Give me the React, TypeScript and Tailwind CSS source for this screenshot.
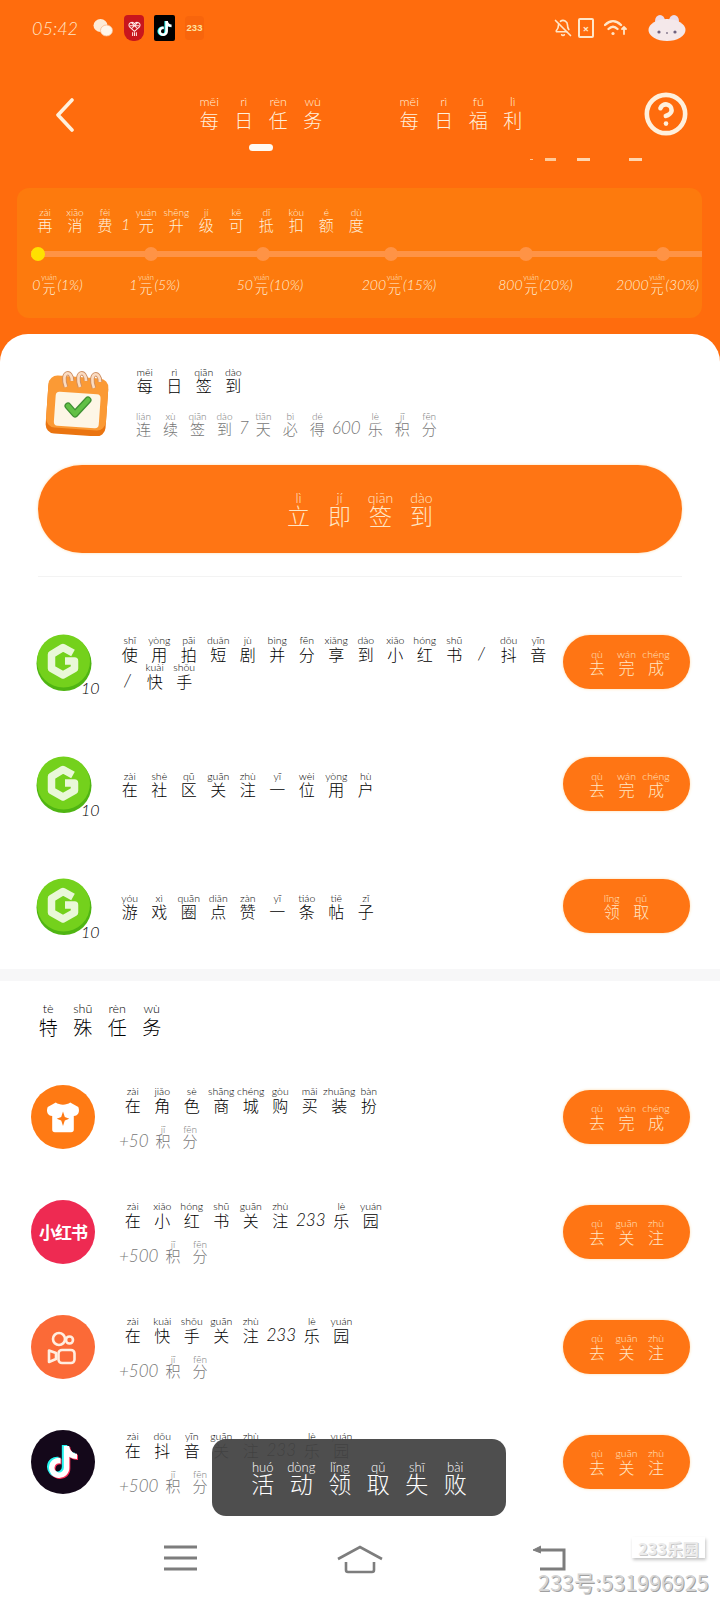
import { CircleHelp, BellOff } from "lucide-react";
import { FaTiktok } from "react-icons/fa";

const presets = {
  tab: { w: "w-[34.5px]", c: "h-[22px] text-[19px]", p: "h-[12px] text-[12.5px]", n: "h-[22px] text-[18px]" },
  row: { w: "w-[29.5px]", c: "h-[16px] text-[16px]", p: "h-[10px] text-[10.5px]", n: "h-[16px] text-[17px] italic" },
  panel: { w: "w-[30px]", c: "h-[16px] text-[15px]", p: "h-[8px] text-[10px]", n: "h-[16px] text-[16px] italic" },
  sub: { w: "w-[27px]", c: "h-[16px] text-[15px]", p: "h-[8px] text-[10px]", n: "h-[16px] text-[17px] italic" },
  label: { w: "w-[15px]", c: "h-[12px] text-[13px]", p: "h-[6px] text-[7.5px]", n: "h-[18px] text-[14px] italic" },
  big: { w: "w-[41px]", c: "h-[22px] text-[23px]", p: "h-[12px] text-[14px]", n: "h-[22px] text-[23px]" },
  toast: { w: "w-[38.5px]", c: "h-[20px] text-[23px]", p: "h-[12px] text-[13px]", n: "h-[20px] text-[23px]" },
};

// one hanzi per cell with its pinyin on top; digits and signs have no pinyin
function Py({ text, py, size, className = "" }: { text: string; py: string; size: keyof typeof presets; className?: string }) {
  const s = presets[size];
  const pins = py.split(" ");
  const tokens = text.match(/[0-9+()%/]+|./g) ?? [];
  let i = 0;
  return (
    <div className={`flex items-end whitespace-nowrap font-['Noto_Sans_CJK_SC',sans-serif] font-light ${className}`}>
      {tokens.map((t, k) => {
        if (/^[0-9+()%/]+$/.test(t)) {
          return (
            <span key={k} className={`${s.n} flex items-center font-['Lato',sans-serif] font-light ${t === "/" ? "px-[9px]" : "px-[1px]"}`}>
              {t}
            </span>
          );
        }
        const pin = pins[i++];
        return (
          <div key={k} className={`${s.w} flex flex-col items-center`}>
            <span className={`${s.p} flex items-center justify-center leading-none font-['Lato',sans-serif]`}>{pin}</span>
            <span className={`${s.c} flex items-center justify-center leading-none`}>{t}</span>
          </div>
        );
      })}
    </div>
  );
}

function Coin() {
  return (
    <div className="relative w-[56px] h-[57px] shrink-0">
      <svg viewBox="0 0 56 57" className="w-[56px] h-[57px]">
        <ellipse cx="28" cy="29.5" rx="27.5" ry="27.5" fill="#4fb512" />
        <ellipse cx="27.5" cy="27" rx="26.5" ry="26.5" fill="#74d11c" />
        <path d="M37 19 L27 13.5 L15.5 20.5 L15.5 34.5 L27 41 L38.5 34.5 L38.5 27 L29 27" fill="none" stroke="#e9f8d8" strokeWidth="7.5" strokeLinejoin="round" />
      </svg>
      <span className="absolute left-[45px] bottom-[-5px] text-[16px] leading-none italic font-light text-black font-['Lato',sans-serif]">10</span>
    </div>
  );
}

function Calendar() {
  return (
    <svg viewBox="0 0 66 66" className="w-[66px] h-[66px] shrink-0">
      <g transform="rotate(4 33 36)">
        <rect x="3" y="9" width="60" height="56" rx="9" fill="#ea7410" />
        <rect x="3" y="7" width="60" height="52" rx="9" fill="#fb9a35" />
        <rect x="11" y="23" width="45" height="34" rx="4" fill="#fdf6e6" />
      </g>
      <path d="M24 36 L31 44 L44 30" fill="none" stroke="#3f8f33" strokeWidth="7" strokeLinecap="round" strokeLinejoin="round" />
      <path d="M24 36 L31 44 L44 30" fill="none" stroke="#62c046" strokeWidth="4.5" strokeLinecap="round" strokeLinejoin="round" />
      <path d="M22 17 C16 1 28 -1 28 11 M36 17 C30 1 42 -1 42 11 M50 18 C44 2 56 0 56 12" fill="none" stroke="#cf8f62" strokeWidth="4.5" />
      <path d="M22 17 C16 1 28 -1 28 11 M36 17 C30 1 42 -1 42 11 M50 18 C44 2 56 0 56 12" fill="none" stroke="#fbdcc2" strokeWidth="2.6" />
    </svg>
  );
}

function Shirt() {
  return (
    <div className="w-[64px] h-[64px] rounded-full bg-[#ff7a14] flex items-center justify-center shrink-0">
      <svg viewBox="0 0 40 40" className="w-[36px] h-[36px]">
        <path d="M12 4 C16 7 24 7 28 4 L37 9 C39 14 37 19 32 19 L32 34 Q32 37 29 37 L11 37 Q8 37 8 34 L8 19 C3 19 1 14 3 9 Z" fill="#fff" />
        <path d="M20 14 L22 20 L27 22 L22 24 L20 30 L18 24 L13 22 L18 20 Z" fill="#ff7a14" />
      </svg>
    </div>
  );
}

function Xhs() {
  return (
    <div className="w-[64px] h-[64px] rounded-full bg-[#ee2a52] flex items-center justify-center shrink-0 text-white text-[17px] font-bold tracking-[-1px] font-['Noto_Sans_CJK_SC',sans-serif]">
      小红书
    </div>
  );
}

function Kuaishou() {
  return (
    <svg viewBox="0 0 64 64" className="w-[64px] h-[64px] shrink-0">
      <circle cx="32" cy="32" r="32" fill="#fb6a37" />
      <g fill="none" stroke="#ffeee0" strokeWidth="2.6" strokeLinejoin="round">
        <circle cx="28" cy="24" r="6" />
        <circle cx="38.5" cy="25" r="3.5" />
        <rect x="27.5" y="35" width="16" height="13" rx="3.5" />
        <path d="M25 38 L18 35.5 L18 47 L25 44 Z" />
      </g>
    </svg>
  );
}

function Douyin() {
  return (
    <div className="w-[64px] h-[64px] rounded-full bg-[#14081a] flex items-center justify-center shrink-0">
      <FaTiktok className="w-[30px] h-[32px] text-white [filter:drop-shadow(-1.5px_-1px_0_#25f4ee)_drop-shadow(1.5px_1px_0_#fe2c55)]" />
    </div>
  );
}

function Btn({ text, py }: { text: string; py: string }) {
  return (
    <div className="ml-auto w-[127px] h-[54px] rounded-full bg-[#ff7514] shadow-[0_0_3px_#ffd9a8] flex items-center justify-center text-[#ffe6c4] shrink-0">
      <Py text={text} py={py} size="row" />
    </div>
  );
}

const track = [
  { ml: "ml-0", bg: "bg-[#ffe100]" },
  { ml: "ml-[99px]", bg: "bg-[#ff9345]" },
  { ml: "ml-[98px]", bg: "bg-[#ff9345]" },
  { ml: "ml-[114px]", bg: "bg-[#ff9345]" },
  { ml: "ml-[121px]", bg: "bg-[#ff9345]" },
  { ml: "ml-[123px]", bg: "bg-[#ff9345]" },
];

const labels = [
  { a: "0", b: "(1%)", box: "ml-[14px] w-[53px]" },
  { a: "1", b: "(5%)", box: "ml-[45px] w-[51px]" },
  { a: "50", b: "(10%)", box: "ml-[56px] w-[68px]" },
  { a: "200", b: "(15%)", box: "ml-[57px] w-[76px]" },
  { a: "800", b: "(20%)", box: "ml-[60px] w-[77px]" },
  { a: "2000", b: "(30%)", box: "ml-[41px] w-[85px]" },
];

const daily = [
  {
    text: "使用拍短剧并分享到小红书/抖音/快手",
    py: "shǐ yòng pāi duǎn jù bìng fēn xiǎng dào xiǎo hóng shū dǒu yīn kuài shǒu",
    btn: "去完成",
    btnPy: "qù wán chéng",
  },
  { text: "在社区关注一位用户", py: "zài shè qū guān zhù yī wèi yòng hù", btn: "去完成", btnPy: "qù wán chéng" },
  { text: "游戏圈点赞一条帖子", py: "yóu xì quān diǎn zàn yī tiáo tiě zǐ", btn: "领取", btnPy: "lǐng qǔ" },
];

const special = [
  { icon: <Shirt />, text: "在角色商城购买装扮", py: "zài jiǎo sè shāng chéng gòu mǎi zhuāng bàn", pts: "+50", btn: "去完成", btnPy: "qù wán chéng" },
  { icon: <Xhs />, text: "在小红书关注233乐园", py: "zài xiǎo hóng shū guān zhù lè yuán", pts: "+500", btn: "去关注", btnPy: "qù guān zhù" },
  { icon: <Kuaishou />, text: "在快手关注233乐园", py: "zài kuài shǒu guān zhù lè yuán", pts: "+500", btn: "去关注", btnPy: "qù guān zhù" },
  { icon: <Douyin />, text: "在抖音关注233乐园", py: "zài dǒu yīn guān zhù lè yuán", pts: "+500", btn: "去关注", btnPy: "qù guān zhù" },
];

// the sentence wraps by words so "/快手" drops to the second line
function DailyText({ text, py }: { text: string; py: string }) {
  if (!text.includes("/")) return <Py text={text} py={py} size="row" />;
  const pins = py.split(" ");
  return (
    <div className="flex flex-wrap gap-y-[1px] w-[440px]">
      <Py text="使用拍短剧并分享到小红书/抖音" py={pins.slice(0, 14).join(" ")} size="row" />
      <Py text="/快手" py={pins.slice(14).join(" ")} size="row" />
    </div>
  );
}

export default function App() {
  return (
    <div className="relative w-[720px] h-[1600px] overflow-hidden bg-white text-black">
      {/* orange header */}
      <div className="bg-[#ff6c0d] text-[#fff0dc] pb-[56px] -mb-[40px]">
        <div className="h-[56px] flex items-center pl-[32px] text-[#ffe6c8]">
          <span className="text-[18px] italic font-light w-[48px] font-['Lato',sans-serif]">05:42</span>
          <svg viewBox="0 0 20 20" className="ml-[13px] w-[20px] h-[20px]">
            <ellipse cx="7.5" cy="7.5" rx="7" ry="6.5" fill="#fdebd6" />
            <ellipse cx="13.5" cy="12.5" rx="6" ry="5.5" fill="#fff6ea" stroke="#f7b98a" strokeWidth="0.8" />
          </svg>
          <div className="ml-[11px] w-[20px] h-[26px] rounded-t-[4px] rounded-b-[9px] bg-[#c8161d] flex items-center justify-center">
            <svg viewBox="0 0 16 18" className="w-[15px] h-[17px]" fill="none" stroke="#ffe9e6" strokeWidth="1.1">
              <path d="M8 12 L2.5 7 C0.5 3 6 1 8 4 C10 1 15.5 3 13.5 7 Z M5 3 L11 9 M11 3 L5 9 M3 6 H13 M6 13 V17 M8 13 V17 M10 13 V17" />
            </svg>
          </div>
          <div className="ml-[10px] w-[21px] h-[26px] rounded-[2px] bg-black flex items-center justify-center">
            <FaTiktok className="w-[14px] h-[15px] text-white [filter:drop-shadow(-1px_0_0_#25f4ee)]" />
          </div>
          <div className="ml-[10px] w-[19px] h-[24px] rounded-[4px] bg-[#f8650c] flex items-center justify-center text-[9.5px] font-bold text-[#ffe2a0] font-['Liberation_Sans',sans-serif]">
            233
          </div>
          <BellOff className="ml-[350px] w-[18px] h-[20px] shrink-0" strokeWidth={2.2} />
          <div className="ml-[6px] w-[16px] h-[20px] rounded-[2px] border-2 border-[#ffe6c8] flex items-center justify-center text-[11px] leading-none font-bold shrink-0">
            ×
          </div>
          <svg viewBox="0 0 24 18" className="ml-[10px] w-[24px] h-[18px] shrink-0" fill="none" stroke="currentColor" strokeWidth="2.4" strokeLinecap="round">
            <path d="M1 6 C6 1 12 1 17 6" />
            <path d="M4.5 10 C7.5 7 10.5 7 13.5 10" />
            <circle cx="9" cy="14.5" r="1.6" fill="currentColor" stroke="none" />
            <path d="M20 8 V15 M18 10 L20 8 L22 10" strokeWidth="1.8" />
          </svg>
          <svg viewBox="0 0 38 26" className="ml-[20px] w-[38px] h-[26px] shrink-0">
            <ellipse cx="12" cy="6" rx="5" ry="6" fill="#eadcec" />
            <ellipse cx="26" cy="6" rx="5" ry="6" fill="#eadcec" />
            <ellipse cx="19" cy="15" rx="18.5" ry="11" fill="#f4e8ea" />
            <circle cx="11" cy="17" r="1.6" fill="#6f6280" />
            <circle cx="27" cy="17" r="1.6" fill="#6f6280" />
            <circle cx="19" cy="18" r="1" fill="#8a7c90" />
          </svg>
        </div>

        <div className="mt-[40px] flex items-start">
          <svg viewBox="0 0 20 34" className="ml-[55px] mt-[2px] w-[20px] h-[34px] shrink-0" fill="none" stroke="currentColor" strokeWidth="3.6" strokeLinecap="round" strokeLinejoin="round">
            <path d="M17 2 L3 17 L17 32" />
          </svg>
          <div className="ml-[117px] flex flex-col items-center">
            <Py text="每日任务" py="měi rì rèn wù" size="tab" />
            <div className="mt-[14px] w-[24px] h-[7px] rounded-full bg-[#fffaf2]" />
          </div>
          <Py text="每日福利" py="měi rì fú lì" size="tab" className="ml-[62px]" />
          <CircleHelp className="ml-[113px] -mt-[5px] w-[46px] h-[46px] shrink-0" strokeWidth={2.4} />
        </div>

        <div className="mt-[7px] ml-[530px] flex h-[3px] items-center">
          <div className="w-[3px] h-[1px] bg-[#ffc998]" />
          <div className="ml-[12px] w-[11px] h-[3px] bg-[#ffc998]" />
          <div className="ml-[21px] w-[13px] h-[3px] bg-[#ffd6b0]" />
          <div className="ml-[39px] w-[13px] h-[3px] bg-[#ffd6b0]" />
        </div>

        {/* spend progress panel */}
        <div className="mt-[27px] mx-[17px] h-[130px] w-[685px] rounded-[12px] bg-[#fd7a0d] pt-[20px]">
          <Py text="再消费1元升级可抵扣额度" py="zài xiāo fèi yuán shēng jí kě dǐ kòu é dù" size="panel" className="ml-[13px]" />
          <div className="mt-[19px] ml-[14px] w-[671px] h-[6px] bg-[#ff9345] flex items-center">
            {track.map((d, i) => (
              <div key={i} className={`${d.ml} ${d.bg} w-[14px] h-[14px] rounded-full shrink-0`} />
            ))}
          </div>
          <div className="mt-[18px] flex">
            {labels.map((l) => (
              <div key={l.a} className={`${l.box} flex justify-center shrink-0`}>
                <Py text={`${l.a}元${l.b}`} py="yuán" size="label" />
              </div>
            ))}
          </div>
        </div>
      </div>

      {/* white sheet */}
      <div className="relative rounded-t-[28px] bg-white pt-[36px]">
        <div className="flex items-start pl-[44px]">
          <Calendar />
          <div className="ml-[20px] -mt-[3px]">
            <Py text="每日签到" py="měi rì qiān dào" size="row" />
            <Py text="连续签到7天必得600乐积分" py="lián xù qiān dào tiān bì dé lè jī fēn" size="sub" className="mt-[19px] text-[#777777]" />
          </div>
        </div>

        <div className="mt-[29px] mx-[38px] h-[88px] rounded-full bg-[#ff7514] shadow-[0_0_3px_#ffd9a8] flex items-center justify-center text-[#ffe6c4]">
          <Py text="立即签到" py="lì jí qiān dào" size="big" />
        </div>
        <div className="mt-[23px] mx-[38px] h-px bg-[#f3f3f3]" />

        <div className="mt-[24px]">
          {daily.map((r) => (
            <div key={r.text} className="h-[122px] flex items-center pl-[36px] pr-[30px]">
              <Coin />
              <div className="ml-[23px]">
                <DailyText text={r.text} py={r.py} />
              </div>
              <Btn text={r.btn} py={r.btnPy} />
            </div>
          ))}
        </div>

        <div className="mt-[2px] h-[12px] bg-[#f7f7f8]" />

        <Py text="特殊任务" py="tè shū rèn wù" size="tab" className="ml-[31px] mt-[22px]" />

        <div className="mt-[22px]">
          {special.map((r) => (
            <div key={r.text} className="h-[115px] flex items-center pl-[31px] pr-[30px]">
              {r.icon}
              <div className="ml-[23px] pt-[2px]">
                <Py text={r.text} py={r.py} size="row" />
                <Py text={`${r.pts}积分`} py="jī fēn" size="sub" className="mt-[12px] text-[#777777]" />
              </div>
              <Btn text={r.btn} py={r.btnPy} />
            </div>
          ))}
        </div>

        {/* system nav */}
        <div className="mt-[26px] flex items-start text-[#7d7d7d]">
          <svg viewBox="0 0 33 26" className="ml-[164px] w-[33px] h-[26px]" stroke="currentColor" strokeWidth="3">
            <path d="M0 2 H33 M0 13 H33 M0 24 H33" />
          </svg>
          <svg viewBox="0 0 46 29" className="ml-[140px] w-[46px] h-[29px]" fill="none" stroke="currentColor" strokeWidth="2.6">
            <path d="M1 14 L23 2 L45 14" />
            <path d="M9 17 V25 Q9 27 11 27 H35 Q37 27 37 25 V17" />
          </svg>
          <svg viewBox="0 0 34 26" className="ml-[149px] w-[34px] h-[26px]" fill="none" stroke="currentColor" strokeWidth="3">
            <path d="M5 5 H32 V24 H8" />
            <path d="M9 1 L1 5 L9 8" fill="currentColor" strokeWidth="1" />
          </svg>
        </div>
      </div>

      {/* toast */}
      <div className="absolute left-[212px] top-[1439px] w-[294px] h-[77px] rounded-[14px] bg-[#454545]/95 flex items-center justify-center text-white">
        <Py text="活动领取失败" py="huó dòng lǐng qǔ shī bài" size="toast" />
      </div>

      {/* watermark */}
      <div className="absolute left-[632px] top-[1537px] w-[73px] h-[21px] bg-white shadow-[1px_2px_3px_#c4c4c4] flex items-center justify-center text-[16px] font-bold leading-none text-[#ececec] [text-shadow:1px_1px_0_#c8c8c8] font-['Noto_Sans_CJK_SC',sans-serif]">
        233乐园
      </div>
      <div className="absolute left-[538px] top-[1571px] w-[172px] text-[21.5px] leading-none text-[#d6d6d6] [text-shadow:1px_1px_0_#a0a0a0] whitespace-nowrap font-['Noto_Sans_CJK_SC',sans-serif]">
        233号:531996925
      </div>
    </div>
  );
}
